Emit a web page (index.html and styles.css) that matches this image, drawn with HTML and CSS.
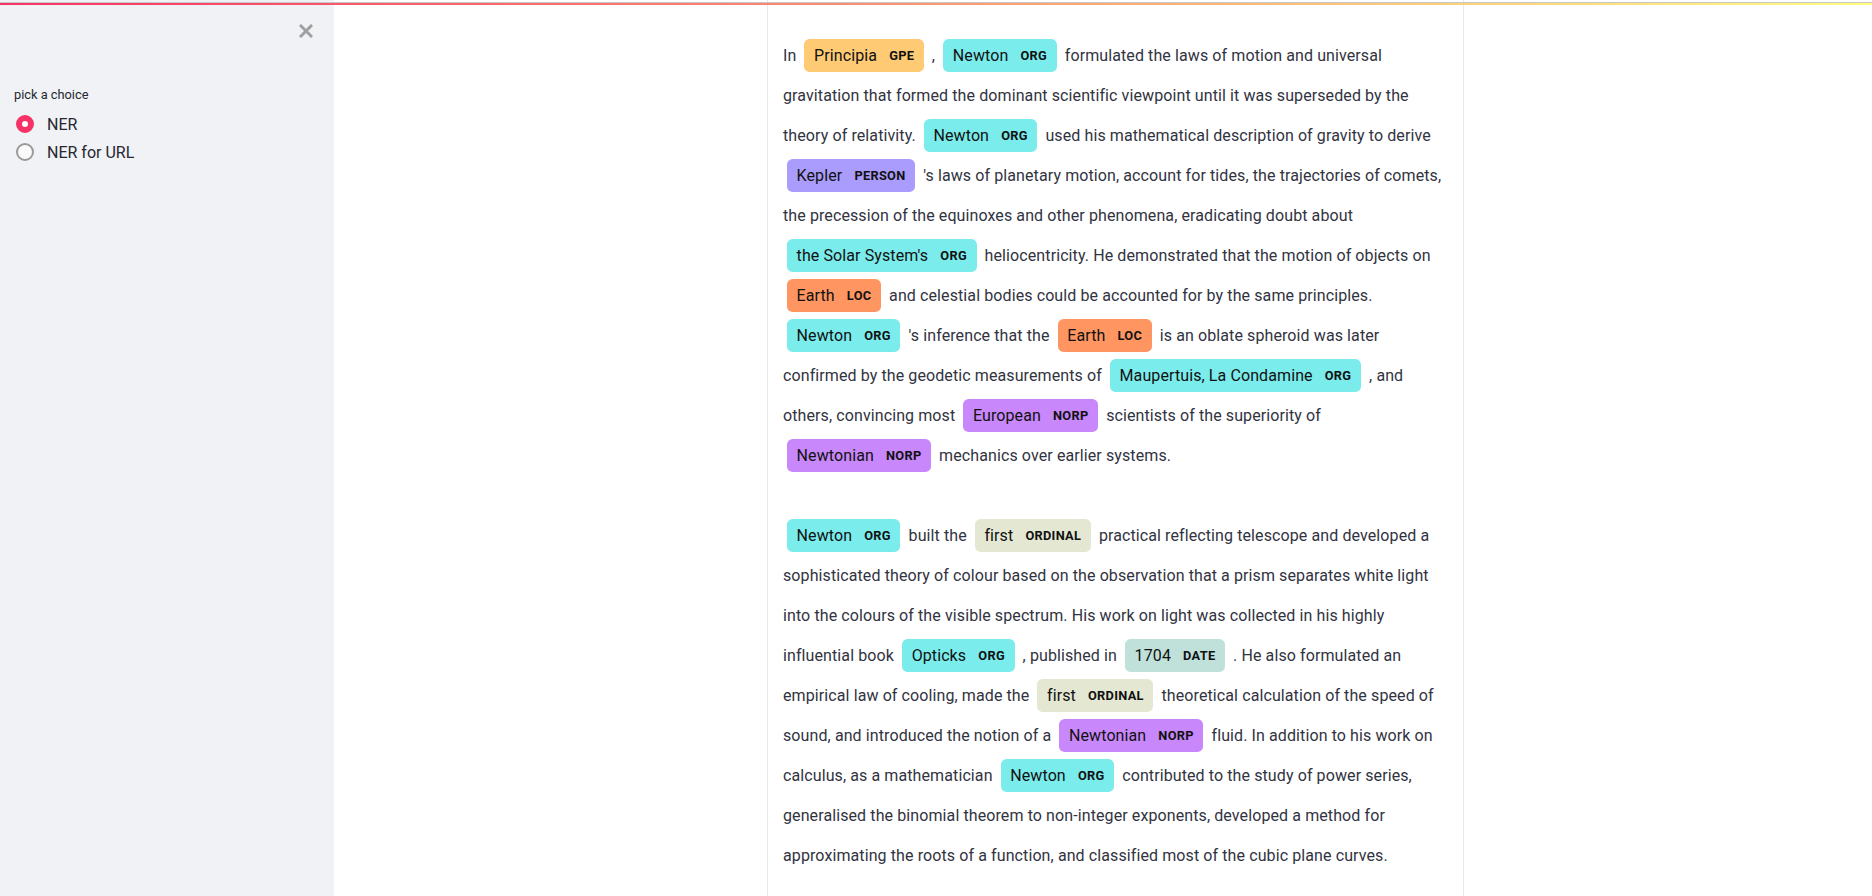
FILE: index.html
```html
<!DOCTYPE html>
<html>
<head>
<meta charset="utf-8">
<link rel="stylesheet" href="styles.css">
</head>
<body>
<div class="topline"></div>
<div class="decoration"></div>
<div class="app">
  <aside class="sidebar">
    <div class="close-row">
      <svg class="close" width="14" height="14" viewBox="0 0 14 14"><path d="M2 2 L12 12 M12 2 L2 12" stroke="#a0a0a0" stroke-width="3" stroke-linecap="square" fill="none"/></svg>
    </div>
    <div class="widget">
      <div class="widget-label">pick a choice</div>
      <div class="radio-group">
        <label class="radio checked"><span class="dot"></span><span class="radio-text">NER</span></label>
        <label class="radio"><span class="dot"></span><span class="radio-text">NER for URL</span></label>
      </div>
    </div>
  </aside>
  <main class="main">
    <div class="entities">In <mark class="entity gpe">Principia <span class="label">GPE</span></mark> , <mark class="entity org">Newton <span class="label">ORG</span></mark> formulated the laws of motion and universal gravitation that formed the dominant scientific viewpoint until it was superseded by the theory of relativity. <mark class="entity org">Newton <span class="label">ORG</span></mark> used his mathematical description of gravity to derive <mark class="entity person">Kepler <span class="label">PERSON</span></mark> 's laws of planetary motion, account for tides, the trajectories of comets, the precession of the equinoxes and other phenomena, eradicating doubt about <mark class="entity org">the Solar System's <span class="label">ORG</span></mark> heliocentricity. He demonstrated that the motion of objects on <mark class="entity loc">Earth <span class="label">LOC</span></mark> and celestial bodies could be accounted for by the same principles. <mark class="entity org">Newton <span class="label">ORG</span></mark> 's inference that the <mark class="entity loc">Earth <span class="label">LOC</span></mark> is an oblate spheroid was later confirmed by the geodetic measurements of <mark class="entity org">Maupertuis, La Condamine <span class="label">ORG</span></mark> , and others, convincing most <mark class="entity norp">European <span class="label">NORP</span></mark> scientists of the superiority of <mark class="entity norp">Newtonian <span class="label">NORP</span></mark> mechanics over earlier systems.<br><br><mark class="entity org">Newton <span class="label">ORG</span></mark> built the <mark class="entity ordinal">first <span class="label">ORDINAL</span></mark> practical reflecting telescope and developed a sophisticated theory of colour based on the observation that a prism separates white light into the colours of the visible spectrum. His work on light was collected in his highly influential book <mark class="entity org">Opticks <span class="label">ORG</span></mark> , published in <mark class="entity date">1704 <span class="label">DATE</span></mark> . He also formulated an empirical law of cooling, made the <mark class="entity ordinal">first <span class="label">ORDINAL</span></mark> theoretical calculation of the speed of sound, and introduced the notion of a <mark class="entity norp">Newtonian <span class="label">NORP</span></mark> fluid. In addition to his work on calculus, as a mathematician <mark class="entity org">Newton <span class="label">ORG</span></mark> contributed to the study of power series, generalised the binomial theorem to non-integer exponents, developed a method for approximating the roots of a function, and classified most of the cubic plane curves.</div>
  </main>
</div>
</body>
</html>
```

FILE: styles.css
```css
html, body {
  margin: 0;
  padding: 0;
  height: 100%;
  overflow: hidden;
  background: #ffffff;
  font-family: Roboto, "Liberation Sans", sans-serif;
  color: #262730;
}

.topline {
  position: fixed;
  top: 2px;
  left: 0;
  right: 0;
  height: 1px;
  background: #c8c8c8;
  z-index: 10;
}

.decoration {
  position: fixed;
  top: 3px;
  left: 0;
  right: 0;
  height: 2px;
  background: linear-gradient(90deg, #f63366, #fffd80);
  z-index: 10;
}

.app {
  display: flex;
  height: 100%;
}

.sidebar {
  width: 334px;
  flex: 0 0 334px;
  background: #f0f2f6;
  box-sizing: border-box;
  padding: 5px 0 0 0;
}

.close-row {
  display: flex;
  justify-content: flex-end;
  padding: 19px 21px 0 0;
  height: 14px;
}

.close {
  display: block;
}

.widget {
  padding: 48px 0 0 14px;
}

.widget-label {
  font-size: 12.8px;
  line-height: 18px;
  color: #262730;
  margin-bottom: 11px;
}

.radio-group {
  display: flex;
  flex-direction: column;
  gap: 10px;
}

.radio {
  display: flex;
  align-items: center;
  height: 18px;
  padding-left: 2px;
}

.dot {
  width: 18px;
  height: 18px;
  box-sizing: border-box;
  border-radius: 50%;
  border: 2px solid #9a9a9a;
  background: #fafafa;
  margin-right: 13px;
}

.radio.checked .dot {
  border: 6px solid #f63366;
  background: #ffffff;
}

.radio-text {
  font-size: 16px;
  color: #262730;
}

.main {
  flex: 1;
  overflow: hidden;
}

.entities {
  width: 665px;
  margin-left: 433px;
  border: 1px solid #e6e9ef;
  border-top: none;
  padding: 36px 15px 40px 15px;
  line-height: 2.5;
  font-size: 16px;
  letter-spacing: 0.1px;
  color: #31333f;
}

.entity {
  padding: 0.45em 0.6em;
  margin: 0 0.25em;
  line-height: 1;
  border-radius: 0.35em;
  color: #111111;
  white-space: nowrap;
}

.label {
  font-size: 0.8em;
  font-weight: bold;
  line-height: 1;
  border-radius: 0.35em;
  text-transform: uppercase;
  vertical-align: middle;
  margin-left: 0.5rem;
  letter-spacing: 0.3px;
}

.org { background: #7aecec; }
.gpe { background: #feca74; }
.person { background: #aa9cfc; }
.loc { background: #ff9561; }
.norp { background: #c887fb; }
.ordinal { background: #e4e7d2; }
.date { background: #bfe1d9; }
```
